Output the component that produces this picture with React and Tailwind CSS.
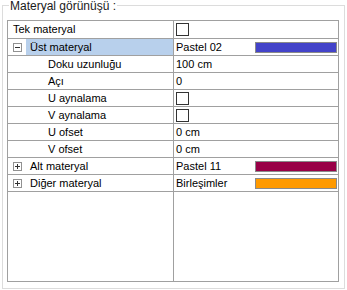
import React from 'react';

const rows = [
  { label: 'Tek materyal', level: 0, value: { type: 'check' } },
  { label: 'Üst materyal', level: 0, toggle: 'minus', selected: true, value: { type: 'swatch', text: 'Pastel 02', color: 'bg-[#4343c9]' } },
  { label: 'Doku uzunluğu', level: 1, value: { type: 'text', text: '100 cm' } },
  { label: 'Açı', level: 1, value: { type: 'text', text: '0' } },
  { label: 'U aynalama', level: 1, value: { type: 'check' } },
  { label: 'V aynalama', level: 1, value: { type: 'check' } },
  { label: 'U ofset', level: 1, value: { type: 'text', text: '0 cm' } },
  { label: 'V ofset', level: 1, value: { type: 'text', text: '0 cm' } },
  { label: 'Alt materyal', level: 0, toggle: 'plus', value: { type: 'swatch', text: 'Pastel 11', color: 'bg-[#990047]' } },
  { label: 'Diğer materyal', level: 0, toggle: 'plus', value: { type: 'swatch', text: 'Birleşimler', color: 'bg-[#ff9a00]' } },
];

function Toggle({ kind }) {
  return (
    <span className="relative w-[9px] h-[9px] border border-[#919191] bg-white shrink-0 flex items-center justify-center">
      <span className="w-[5px] h-[1px] bg-[#333]" />
      {kind === 'plus' && <span className="absolute w-[1px] h-[5px] bg-[#333]" />}
    </span>
  );
}

function Value({ value }) {
  if (value.type === 'check') {
    return <span className="w-[13px] h-[13px] border border-[#333] bg-white ml-[2px]" />;
  }
  if (value.type === 'swatch') {
    return (
      <div className="flex items-center w-full">
        <span className="pl-[2px] w-[81px]">{value.text}</span>
        <span className={`w-[82px] h-[11px] border border-[#8a8a8a] ${value.color}`} />
      </div>
    );
  }
  return <span className="pl-[2px]">{value.text}</span>;
}

function Row({ row, first }) {
  return (
    <div className={`flex border-b border-[#a0a0a0] ${first ? 'h-[18px]' : 'h-[17px]'}`}>
      <div className="w-[166px] border-r border-[#a0a0a0] flex items-center">
        {row.toggle ? (
          <div className="flex items-center h-full w-full pl-[5px]">
            <Toggle kind={row.toggle} />
            <span className={`ml-[4px] h-full flex items-center pl-[4px] flex-1 ${row.selected ? 'bg-[#b8d0ec]' : ''}`}>
              {row.label}
            </span>
          </div>
        ) : (
          <span className={row.level === 1 ? 'pl-[40px]' : 'pl-[5px]'}>{row.label}</span>
        )}
      </div>
      <div className="flex-1 flex items-center">
        <Value value={row.value} />
      </div>
    </div>
  );
}

export default function App() {
  return (
    <div className="w-[347px] h-[290px] bg-white pt-[5px] pl-[2px] text-black text-[11px] leading-none" style={{ fontFamily: '"Liberation Sans", Arial, sans-serif' }}>
      <div className="relative w-[343px] h-[284px] border border-[#dcdcdc] pt-[14px] pl-[4px]">
        <span className="absolute -top-[6px] left-[6px] bg-white px-[1px] text-[12px] text-[#1a1a1a]">Materyal görünüşü :</span>
        <div className="w-[332px] h-[262px] border border-[#a0a0a0] flex flex-col">
          {rows.map((row, i) => (
            <Row key={row.label} row={row} first={i === 0} />
          ))}
          <div className="flex-1 flex">
            <div className="w-[166px] border-r border-[#a0a0a0]" />
          </div>
        </div>
      </div>
    </div>
  );
}
